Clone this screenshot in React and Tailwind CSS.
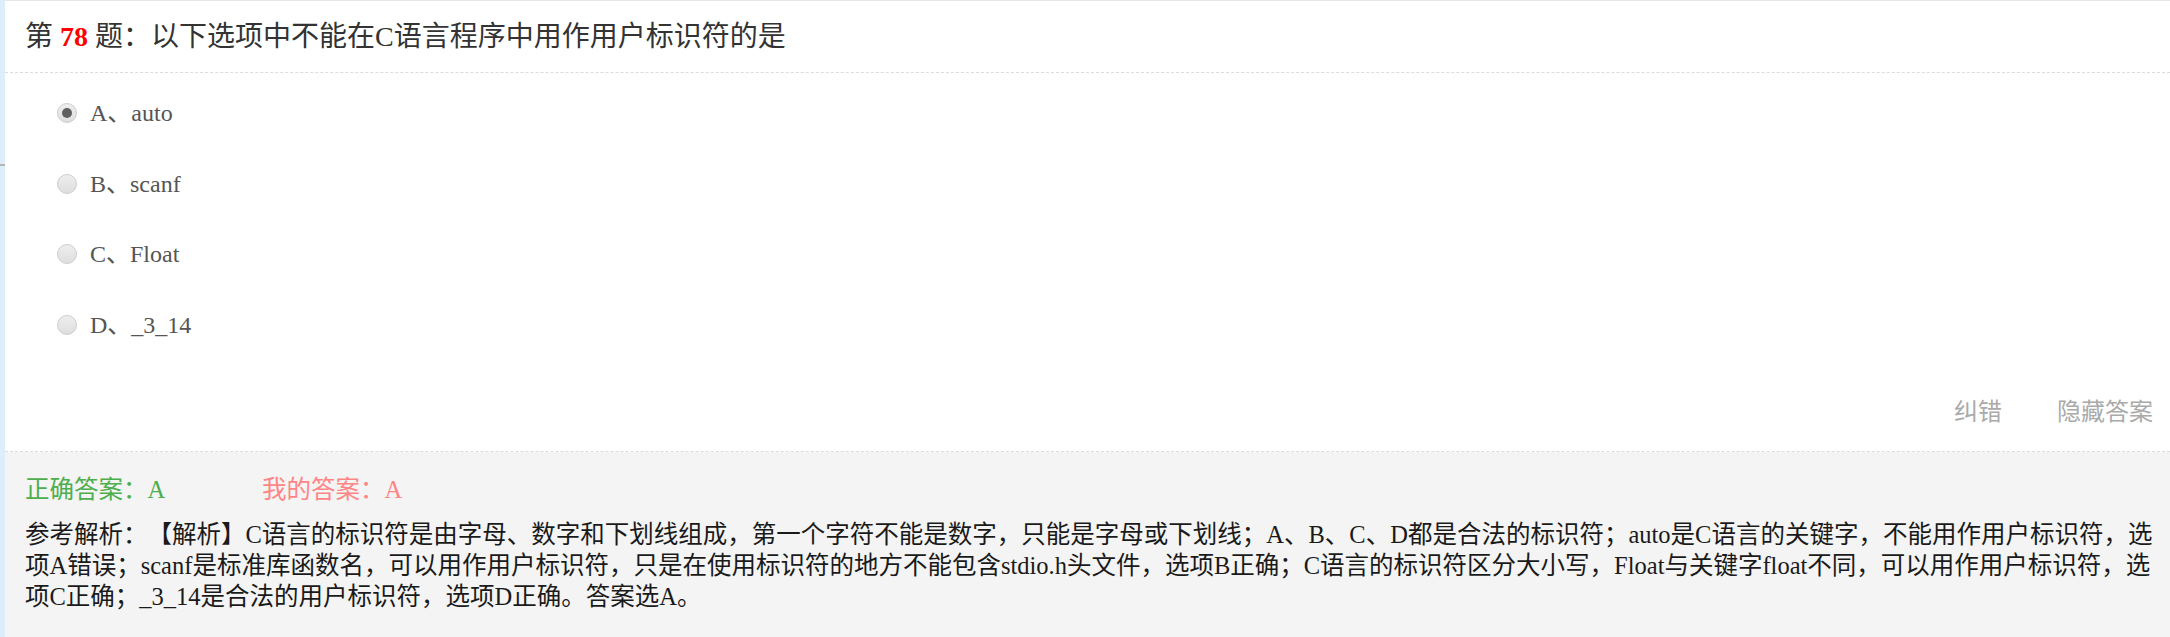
import React from 'react';

const options = [
    { key: 'A', text: 'auto', checked: true },
    { key: 'B', text: 'scanf', checked: false },
    { key: 'C', text: 'Float', checked: false },
    { key: 'D', text: '_3_14', checked: false },
];

const analysis =
    '【解析】C语言的标识符是由字母、数字和下划线组成，第一个字符不能是数字，只能是字母或下划线；A、B、C、D都是合法的标识符；auto是C语言的关键字，不能用作用户标识符，选项A错误；scanf是标准库函数名，可以用作用户标识符，只是在使用标识符的地方不能包含stdio.h头文件，选项B正确；C语言的标识符区分大小写，Float与关键字float不同，可以用作用户标识符，选项C正确；_3_14是合法的用户标识符，选项D正确。答案选A。';

function Radio({ checked }) {
    return (
        <div className="w-[20px] h-[20px] shrink-0 rounded-full border border-[#cdcdcd] bg-gradient-to-b from-[#eeeeee] to-[#dedede] flex items-center justify-center">
            {checked && <div className="w-[10px] h-[10px] rounded-full bg-[#5f5f5f]" />}
        </div>
    );
}

export default function App() {
    return (
        <div className="flex h-[637px] overflow-hidden bg-white font-['Liberation_Serif','Noto_Sans_CJK_SC',serif] [text-spacing-trim:space-all]">
            {/* left strip */}
            <div className="w-[5px] shrink-0 bg-[#deedfb] flex flex-col">
                <div className="h-[164px]" />
                <div className="h-[2px] bg-[#b5b5b5]" />
            </div>

            <div className="flex-1 flex flex-col border-t border-[#e6e6e6]">
                {/* question title */}
                <div className="h-[72px] flex items-center pl-[20px] border-b border-dashed border-[#dcdcdc] text-[28px] text-[#333] leading-none">
                    <span>第 <span className="text-[#ff0000] font-bold">78</span> 题：以下选项中不能在C语言程序中用作用户标识符的是</span>
                </div>

                {/* options */}
                <div className="pt-[5px] pl-[52px] flex flex-col">
                    {options.map((opt) => (
                        <label key={opt.key} className="h-[70.5px] flex items-center gap-[13px] text-[24px] text-[#555]">
                            <Radio checked={opt.checked} />
                            <span>{opt.key}、{opt.text}</span>
                        </label>
                    ))}
                </div>

                {/* actions */}
                <div className="h-[92px] pt-[8px] flex items-center justify-end gap-[55px] pr-[17px] text-[24px] text-[#aaaaaa] border-b border-dashed border-[#dcdcdc] font-['Noto_Sans_CJK_SC',sans-serif]">
                    <span>纠错</span>
                    <span>隐藏答案</span>
                </div>

                {/* answer panel */}
                <div className="flex-1 bg-[#f4f4f4] pt-[23px] pl-[20px] pr-[7px] text-[24.5px]">
                    <div className="flex leading-[30px]">
                        <span className="w-[237px] text-[#4cae4c]">正确答案：A</span>
                        <span className="text-[#ff8585]">我的答案：A</span>
                    </div>
                    <p className="mt-[14px] leading-[31px] text-[#1a1a1a] w-[2138px]">
                        参考解析：{analysis}
                    </p>
                </div>
            </div>
        </div>
    );
}
